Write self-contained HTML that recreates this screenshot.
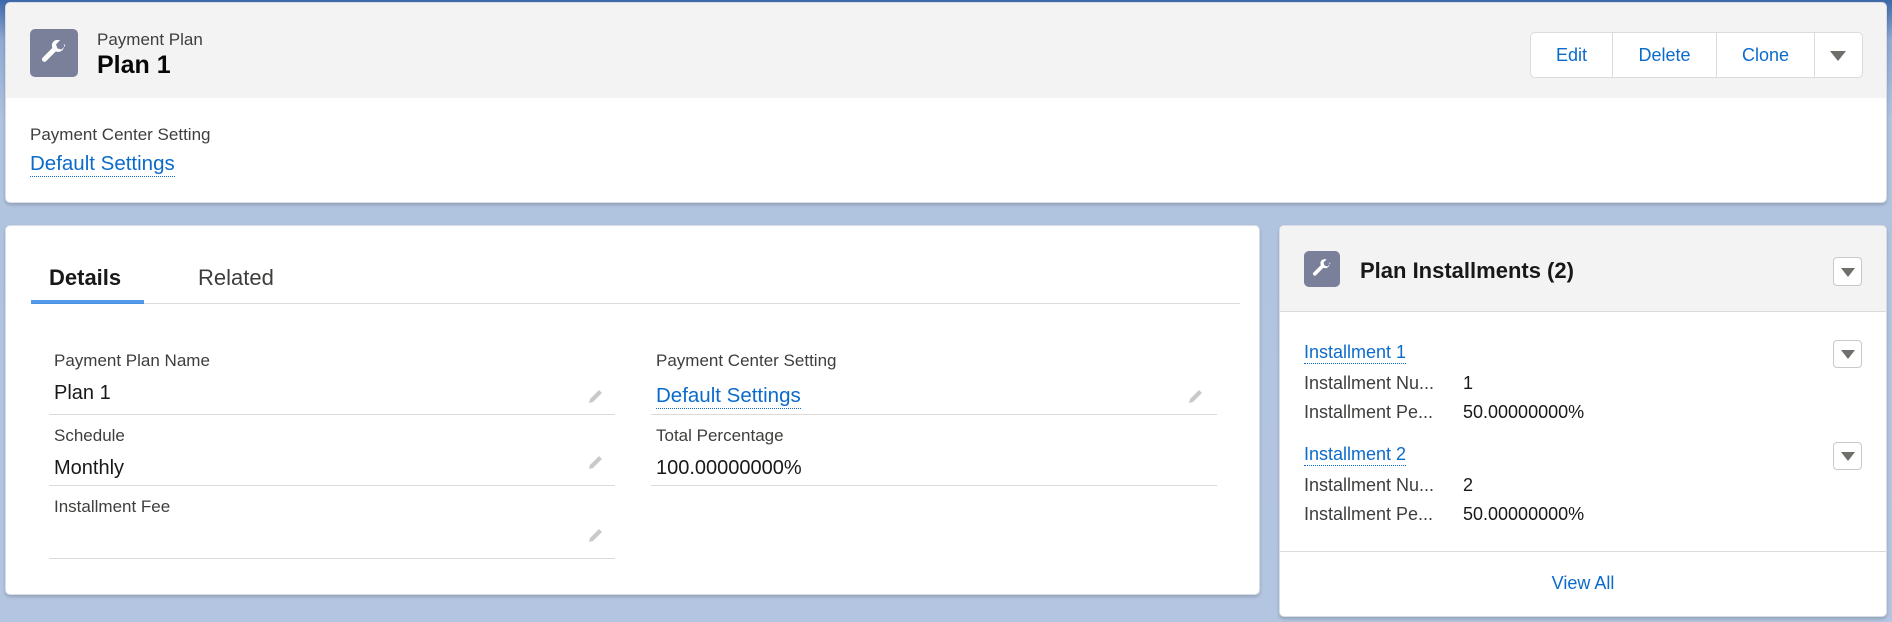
<!DOCTYPE html>
<html><head><style>
*{box-sizing:border-box;margin:0;padding:0}
body{width:1892px;height:622px;overflow:hidden;font-family:"Liberation Sans",sans-serif;background:linear-gradient(#3d68a8 0px,#8fa9d2 40px,#b0c3df 120px,#b3c5e0 622px);position:relative;color:#181818}
.abs{position:absolute}
.card{position:absolute;background:#fff;border-radius:5px;box-shadow:0 2px 3px rgba(0,0,0,.18);border:1px solid #d8dde6;overflow:hidden}
.icon{position:absolute;background:#7a7f9a;border-radius:5px;display:flex;align-items:center;justify-content:center}
.lbl{position:absolute;font-size:17px;color:#3e3e3c}
.val{position:absolute;font-size:20px;color:#181818}
.lnk{position:absolute;color:#0b6bcb;border-bottom:1px dotted #0b6bcb;line-height:1.1}
.line{position:absolute;height:1px;background:#dddbda}
.dd{position:absolute;border:1px solid #c9c9c9;border-radius:4px;background:#fff}
.dd:after{content:"";position:absolute;left:50%;top:50%;margin:-4px 0 0 -7px;border-left:7px solid transparent;border-right:7px solid transparent;border-top:9px solid #706e6b}
.pen{position:absolute;width:20px;height:20px}
.it{position:absolute;font-size:18px}
</style></head><body>
<div class="card" style="left:5px;top:2px;width:1882px;height:201px">
 <div class="abs" style="left:0;top:0;width:100%;height:95px;background:#f3f3f3"></div>
 <div class="icon" style="left:24px;top:26px;width:48px;height:48px">
  <svg width="32" height="32" viewBox="0 0 24 24"><path d="M20.5 6.5l-3 3-3-1-1-3 3-3c-2.5-1-5.5.3-6 3-.2 1 0 2 .3 2.7L3.5 15.5a1.8 1.8 0 002.6 2.6l7.3-7.3c.8.4 1.8.5 2.8.3 2.7-.6 4-3.6 3-6z" fill="#fff"/></svg>
 </div>
 <div class="abs" style="left:91px;top:27px;font-size:17px;color:#3e3e3c">Payment Plan</div>
 <div class="abs" style="left:91px;top:48px;font-size:25px;font-weight:bold;color:#080707">Plan 1</div>
 <div class="abs" style="left:1524px;top:29px;width:333px;height:46px;border:1px solid #dddbda;border-radius:5px;background:#fff;display:flex;font-size:18px;color:#0b6bcb">
  <div style="width:82px;display:flex;align-items:center;justify-content:center;border-right:1px solid #dddbda">Edit</div>
  <div style="width:104px;display:flex;align-items:center;justify-content:center;border-right:1px solid #dddbda">Delete</div>
  <div style="width:98px;display:flex;align-items:center;justify-content:center;border-right:1px solid #dddbda">Clone</div>
  <div style="flex:1;position:relative"><div style="position:absolute;left:15px;top:18px;border-left:8px solid transparent;border-right:8px solid transparent;border-top:10px solid #706e6b"></div></div>
 </div>
 <div class="lbl" style="left:24px;top:122px">Payment Center Setting</div>
 <div class="lnk" style="left:24px;top:150px;font-size:20.5px">Default Settings</div>
</div>

<div class="card" style="left:5px;top:225px;width:1255px;height:370px">
 <div class="abs" style="left:43px;top:39px;font-size:22px;font-weight:bold">Details</div>
 <div class="abs" style="left:192px;top:39px;font-size:22px;color:#3e3e3c">Related</div>
 <div class="line" style="left:25px;top:77px;width:1209px"></div>
 <div class="abs" style="left:25px;top:74px;width:113px;height:4px;background:#1b78e0;opacity:.75"></div>

 <div class="lbl" style="left:48px;top:125px">Payment Plan Name</div>
 <div class="val" style="left:48px;top:156px">Plan 1</div>
 <div class="line" style="left:43px;top:188px;width:566px"></div>
 <div class="lbl" style="left:48px;top:200px">Schedule</div>
 <div class="val" style="left:48px;top:231px">Monthly</div>
 <div class="line" style="left:43px;top:259px;width:566px"></div>
 <div class="lbl" style="left:48px;top:271px">Installment Fee</div>
 <div class="line" style="left:43px;top:332px;width:566px"></div>

 <div class="lbl" style="left:650px;top:125px">Payment Center Setting</div>
 <div class="lnk" style="left:650px;top:159px;font-size:20.5px">Default Settings</div>
 <div class="line" style="left:645px;top:188px;width:566px"></div>
 <div class="lbl" style="left:650px;top:200px">Total Percentage</div>
 <div class="val" style="left:650px;top:231px">100.00000000%</div>
 <div class="line" style="left:645px;top:259px;width:566px"></div>

 <svg class="pen" style="left:580px;top:159px" viewBox="0 0 20 20"><path d="M4 14l9-9 3 3-9 9-4 1z" fill="#c9c9c9"/></svg>
 <svg class="pen" style="left:580px;top:225px" viewBox="0 0 20 20"><path d="M4 14l9-9 3 3-9 9-4 1z" fill="#c9c9c9"/></svg>
 <svg class="pen" style="left:580px;top:298px" viewBox="0 0 20 20"><path d="M4 14l9-9 3 3-9 9-4 1z" fill="#c9c9c9"/></svg>
 <svg class="pen" style="left:1180px;top:159px" viewBox="0 0 20 20"><path d="M4 14l9-9 3 3-9 9-4 1z" fill="#c9c9c9"/></svg>
</div>

<div class="card" style="left:1279px;top:225px;width:608px;height:392px">
 <div class="abs" style="left:0;top:0;width:100%;height:86px;background:#f3f3f3;border-bottom:1px solid #dddbda"></div>
 <div class="icon" style="left:24px;top:25px;width:36px;height:36px">
  <svg width="24" height="24" viewBox="0 0 24 24"><path d="M20.5 6.5l-3 3-3-1-1-3 3-3c-2.5-1-5.5.3-6 3-.2 1 0 2 .3 2.7L3.5 15.5a1.8 1.8 0 002.6 2.6l7.3-7.3c.8.4 1.8.5 2.8.3 2.7-.6 4-3.6 3-6z" fill="#fff"/></svg>
 </div>
 <div class="abs" style="left:80px;top:32px;font-size:22px;font-weight:bold">Plan Installments (2)</div>
 <div class="dd" style="left:553px;top:31px;width:29px;height:29px"></div>

 <div class="lnk" style="left:24px;top:117px;font-size:18px">Installment 1</div>
 <div class="dd" style="left:553px;top:114px;width:29px;height:28px"></div>
 <div class="it" style="left:24px;top:147px;color:#3e3e3c">Installment Nu...</div>
 <div class="it" style="left:183px;top:147px">1</div>
 <div class="it" style="left:24px;top:176px;color:#3e3e3c">Installment Pe...</div>
 <div class="it" style="left:183px;top:176px">50.00000000%</div>

 <div class="lnk" style="left:24px;top:219px;font-size:18px">Installment 2</div>
 <div class="dd" style="left:553px;top:216px;width:29px;height:28px"></div>
 <div class="it" style="left:24px;top:249px;color:#3e3e3c">Installment Nu...</div>
 <div class="it" style="left:183px;top:249px">2</div>
 <div class="it" style="left:24px;top:278px;color:#3e3e3c">Installment Pe...</div>
 <div class="it" style="left:183px;top:278px">50.00000000%</div>

 <div class="line" style="left:0;top:325px;width:100%"></div>
 <div class="abs" style="left:0;top:347px;width:100%;text-align:center;font-size:18px;color:#0b6bcb">View All</div>
</div>
</body></html>
